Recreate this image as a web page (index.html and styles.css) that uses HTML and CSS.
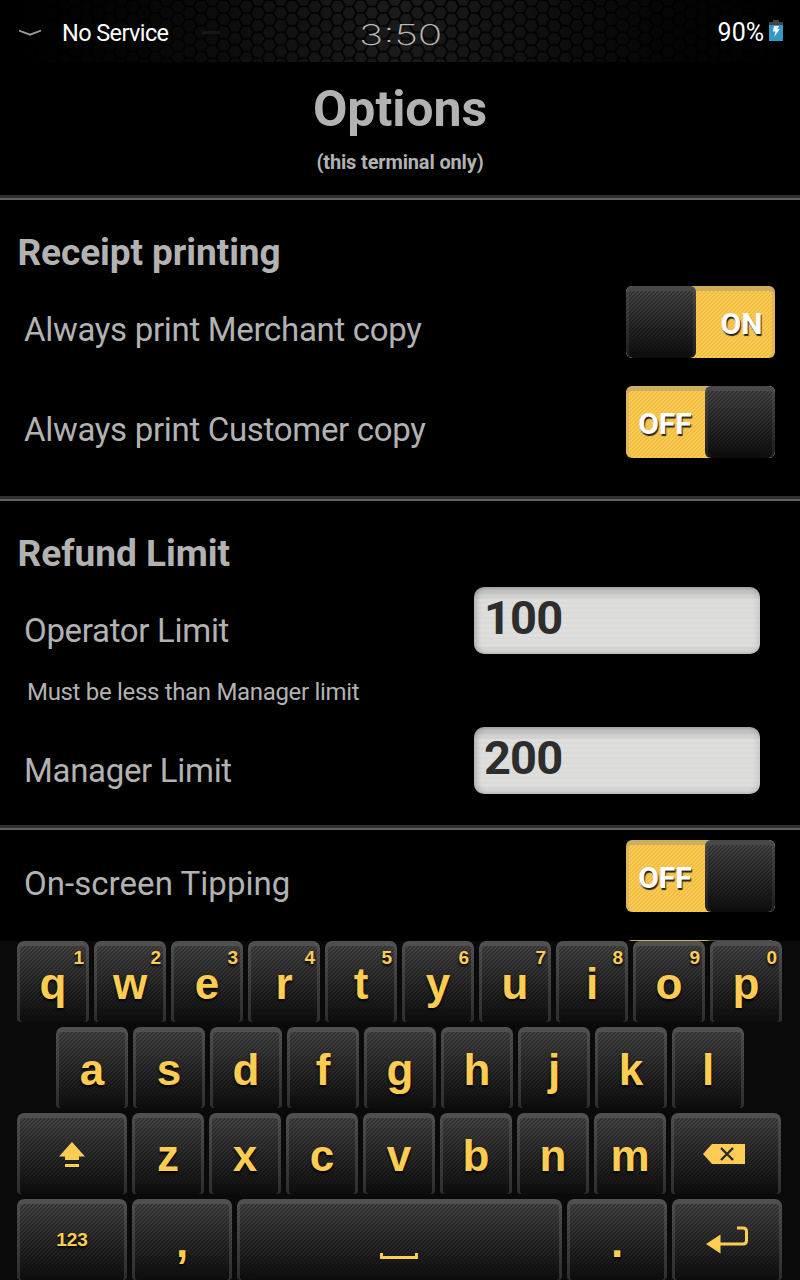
FILE: index.html
```html
<!DOCTYPE html>
<html lang="en">
<head>
<meta charset="utf-8">
<title>Options</title>
<link rel="stylesheet" href="styles.css">
</head>
<body>
<div class="screen">
  <header class="status">
    <svg class="mesh" width="800" height="62" aria-hidden="true">
      <defs>
        <pattern id="hex" width="22.8" height="12.9" patternUnits="userSpaceOnUse" x="7" y="0">
          <path d="M0 6.45H4L7.6 0H15.2L19 6.45L15.2 12.9H7.6L4 6.45M19 6.45H22.8" fill="none" stroke="#000" stroke-width="1.6"/>
        </pattern>
        <linearGradient id="fade"><stop offset="0" stop-color="#000"/><stop offset=".15" stop-color="#040404"/><stop offset=".5" stop-color="#1b1b1b"/><stop offset=".85" stop-color="#040404"/><stop offset="1" stop-color="#000"/></linearGradient>
      </defs>
      <rect width="800" height="62" fill="url(#fade)"/>
      <rect width="800" height="62" fill="url(#hex)"/>
      <rect x="202" y="31" width="18" height="3" fill="#161a16"/>
    </svg>
    <div class="status-left">
      <svg width="22" height="8" viewBox="0 0 22 8"><path d="M0 1.5L11 5.7L22 1.5" fill="none" stroke="#999" stroke-width="1.8"/></svg>
      <span class="carrier">No Service</span>
    </div>
    <span class="clock">3:50</span>
    <div class="status-right">
      <span class="percent">90%</span>
      <svg class="battery" width="14" height="21" viewBox="0 0 14 21"><path d="M4 0H10V2H14V5H0V2H4Z" fill="#444"/><path d="M0 5H14V21H0Z" fill="#3398c4"/><path d="M5 6H10L8.500 9H11L5 17L6.500 11.500H3.800Z" fill="#e8f6fc"/></svg>
    </div>
  </header>

  <main class="content">
    <div class="title-block">
      <h1 class="title">Options</h1>
      <p class="subtitle">(this terminal only)</p>
    </div>
    <hr class="divider">
    <section class="receipt">
      <h2 class="heading tight">Receipt printing</h2>
      <div class="row first"><span class="label">Always print Merchant copy</span><div class="toggle on"><i class="knob"></i><b class="state">ON</b></div></div>
      <div class="row"><span class="label">Always print Customer copy</span><div class="toggle off"><b class="state">OFF</b><i class="knob"></i></div></div>
    </section>
    <hr class="divider">
    <section class="refund">
      <h2 class="heading">Refund Limit</h2>
      <div class="field-row"><span class="label">Operator Limit</span><div class="field">100</div></div>
      <p class="hint">Must be less than Manager limit</p>
      <div class="field-row"><span class="label">Manager Limit</span><div class="field">200</div></div>
    </section>
    <hr class="divider">
    <section class="tipping">
      <div class="row"><span class="label loose">On-screen Tipping</span><div class="toggle off"><b class="state">OFF</b><i class="knob"></i></div></div>
      <div class="row next"><div class="toggle off"><b class="state"></b><i class="knob"></i></div></div>
    </section>
  </main>

  <div class="keyboard">
    <div class="keys">
      <div class="key">q<sup>1</sup></div><div class="key">w<sup>2</sup></div><div class="key">e<sup>3</sup></div><div class="key">r<sup>4</sup></div><div class="key">t<sup>5</sup></div><div class="key">y<sup>6</sup></div><div class="key">u<sup>7</sup></div><div class="key">i<sup>8</sup></div><div class="key">o<sup>9</sup></div><div class="key">p<sup>0</sup></div>
    </div>
    <div class="keys inset">
      <div class="key">a</div><div class="key">s</div><div class="key">d</div><div class="key">f</div><div class="key">g</div><div class="key">h</div><div class="key">j</div><div class="key">k</div><div class="key">l</div>
    </div>
    <div class="keys">
      <div class="key wide"><svg class="icon shift" width="26" height="25" viewBox="0 0 26 25"><path d="M13 0L26 14.500H20V18H6V14.500H0ZM6 22H20V25H6Z"/></svg></div>
      <div class="key">z</div><div class="key">x</div><div class="key">c</div><div class="key">v</div><div class="key">b</div><div class="key">n</div><div class="key">m</div>
      <div class="key wide"><svg class="icon back" width="42" height="20" viewBox="0 0 42 20"><path d="M0 10L9 0H42V20H9Z"/><path class="cross" d="M18 4L30 16M30 4L18 16"/></svg></div>
    </div>
    <div class="keys">
      <div class="key wide"><span class="num">123</span></div>
      <div class="key mid">,</div>
      <div class="key space"><svg class="icon bar" width="38" height="6" viewBox="0 0 38 6"><path d="M0 0H3V3H35V0H38V6H0Z"/></svg></div>
      <div class="key mid">.</div>
      <div class="key wide"><svg class="icon enter" width="43" height="28" viewBox="0 0 43 28"><path d="M0 18L14.500 8.500V27.500Z"/><path class="line" d="M14 18H37Q40.500 18 40.500 14.500V5.500Q40.500 2 37 2H31"/></svg></div>
    </div>
  </div>
</div>
</body>
</html>
```
FILE: styles.css
```css
* { box-sizing: border-box; }
body { margin: 0; background: #000; font-family: Roboto, "Liberation Sans", sans-serif; color: #b2b2b2; }
h1, h2, p, hr { margin: 0; }
.screen { width: 800px; height: 1280px; overflow: hidden; background: #000; display: flex; flex-direction: column; }

.status { position: relative; height: 62px; flex: none; display: grid; grid-template-columns: 1fr auto 1fr; align-items: center; padding: 0 17px 0 19px; color: #fff; }
.mesh { position: absolute; inset: 0; }
.status-left, .status-right, .clock { position: relative; }
.status-left { display: flex; align-items: center; gap: 21px; padding-top: 3px; }
.carrier { font-size: 23.500px; line-height: 28px; letter-spacing: -.6px; }
.clock { font: 200 28px/30px Inter, sans-serif; color: #b8b8b8; transform: scaleX(1.45); padding-top: 7px; }
.status-right { display: flex; justify-content: flex-end; align-items: center; gap: 5px; padding-top: 4px; }
.percent { font-size: 25px; line-height: 28px; }
.battery { margin-top: -5px; }

.content { height: 879px; flex: none; overflow: hidden; }
.title-block { height: 133px; text-align: center; padding-top: 17px; }
.title { font-size: 50px; line-height: 60px; font-weight: 700; letter-spacing: -.1px; }
.subtitle { font-size: 20px; line-height: 24px; font-weight: 700; padding-top: 11px; letter-spacing: -.15px; }
.divider { height: 5px; border: 0; background: linear-gradient(#303030 3px, #606060 3px); }
.heading { font-size: 37px; line-height: 44px; font-weight: 700; padding-left: 17.500px; }
.heading.tight { letter-spacing: -.08px; }
.receipt { height: 296px; padding-top: 31px; }
.refund { height: 324px; padding-top: 31px; }
.tipping { padding-top: 10px; }
.row { display: flex; justify-content: space-between; height: 72px; margin-bottom: 28px; padding: 0 25px 0 24px; }
.row.first { margin-top: 11px; }
.row.next { justify-content: flex-end; }
.label { font-size: 33px; line-height: 40px; padding-top: 24px; letter-spacing: -.31px; }
.label.loose { letter-spacing: .05px; }
.toggle { width: 149px; height: 72px; border-radius: 6px; overflow: hidden; display: flex;
  background: linear-gradient(135deg, rgba(190,140,30,.2) 0 25%, transparent 25% 50%, rgba(190,140,30,.2) 50% 75%, transparent 75%) 0 0 / 4px 4px, #fdcb4f;
  box-shadow: inset 0 5px #cdae5f, inset 3px 0 #e0b956, inset -3px 0 #e0b956; }
.knob { width: 70px; border-radius: 6px; }
.state { width: 79px; color: #fff; font-size: 30px; line-height: 76px; font-weight: 700; text-shadow: 1px 2px 1px #222; text-align: center; }
.on .state { padding-left: 12px; }
.off .state { padding-right: 1px; }
.knob, .key {
  background: linear-gradient(135deg, rgba(0,0,0,.26) 0 25%, transparent 25% 50%, rgba(0,0,0,.26) 50% 75%, transparent 75%) 0 0 / 4px 4px, linear-gradient(#484848, #0e0e0e);
  box-shadow: inset 0 5px #505050, inset 3px 0 rgba(110,110,110,.35), inset -3px 0 rgba(110,110,110,.35); }
.knob { box-shadow: inset 0 5px #484848, inset 3px 0 rgba(110,110,110,.18), inset -3px 0 rgba(110,110,110,.18); }

.field-row { display: flex; justify-content: space-between; height: 67px; margin-top: 11px; padding: 0 40px 0 24px; }
.field-row + .hint { margin-top: 0; }
.hint + .field-row { margin-top: 12px; }
.field { width: 286px; height: 67px; border-radius: 10px; color: #2d2d2d; font-size: 47px; line-height: 62px; font-weight: 700; letter-spacing: -.9px; padding-left: 10px;
  background: repeating-linear-gradient(rgba(0,0,0,.02) 0 2px, transparent 2px 5px), linear-gradient(#b3b3b2, #dededd 13px 58px, #cccccb);
  box-shadow: inset 5px 0 6px -3px rgba(0,0,0,.25), inset -5px 0 6px -3px rgba(0,0,0,.12); }
.hint { font-size: 24px; line-height: 30px; padding: 23px 0 0 27px; height: 61px; letter-spacing: -.32px; }

.keyboard { height: 339px; flex: none; background: #0a0a0a; padding-left: 17px; display: flex; flex-direction: column; gap: 5px; }
.keys { display: flex; gap: 5px; }
.inset { padding-left: 39px; }
.key { position: relative; flex: none; width: 72px; height: 81px; border-radius: 7px 7px 3px 3px; color: #fdcc52; font: 700 44px/86px "Liberation Sans", sans-serif; text-align: center; text-shadow: 0 2px 3px #000; }
.key sup { position: absolute; right: 5px; top: 7px; font-size: 19px; line-height: 20px; }
.wide { width: 110px; }
.mid { width: 100px; }
.space { width: 325px; }
.num { display: block; font-size: 19px; line-height: 81px; }
.icon { display: block; margin: 0 auto; fill: #fdcc52; }
.shift { margin-top: 29px; }
.back { margin-top: 31px; margin-left: 32px; }
.cross { fill: none; stroke: #2a2a2a; stroke-width: 2.4; }
.bar { margin-top: 54px; margin-left: 143px; }
.enter { margin-top: 27px; }
.line { fill: none; stroke: #fdcc52; stroke-width: 3; }
```
